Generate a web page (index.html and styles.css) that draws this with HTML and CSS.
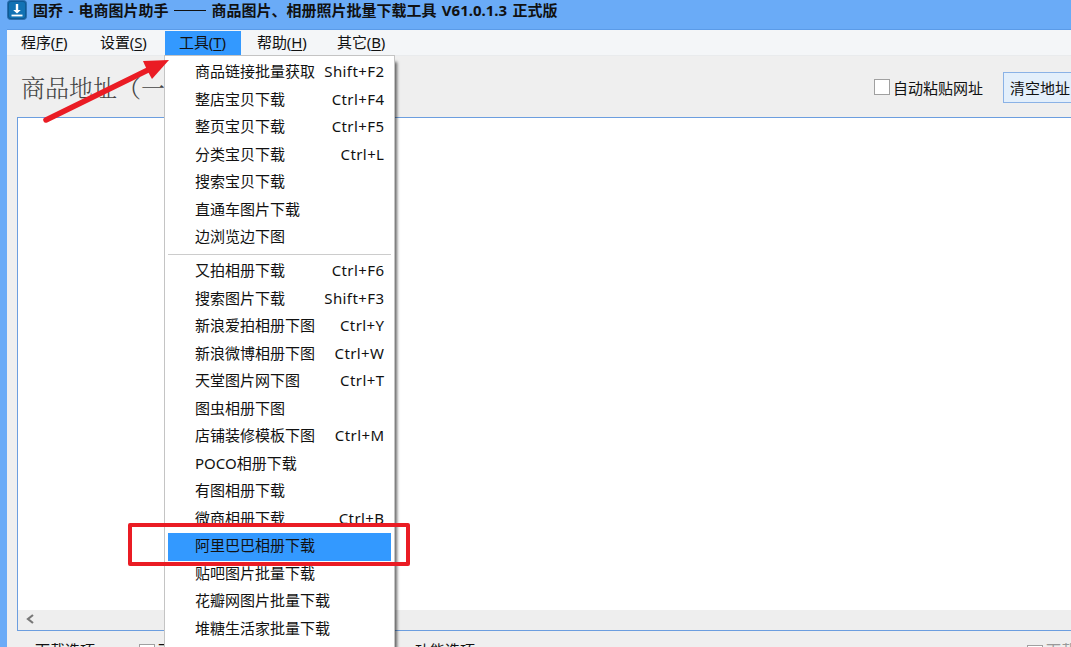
FILE: index.html
```
<!DOCTYPE html>
<html lang="zh-Hans">
<head>
  <meta charset="UTF-8">
  <title>固乔 - 电商图片助手</title>
  <link rel="stylesheet" href="styles.css">
</head>
<body>
  <div class="window">
    <div class="titlebar">
      <svg class="logo" width="20" height="20" viewBox="0 0 20 20">
        <rect x="0.5" y="0.5" width="19" height="19" rx="3" fill="#0d5a96" stroke="#2d6fae"/>
        <rect x="2" y="2" width="16" height="16" rx="2" fill="#1272b4"/>
        <path d="M8.8 4h2.4v6h2.6L10 13.6 6.2 10h2.6z" fill="#fff"/>
        <path d="M4.5 15.5h11" fill="none" stroke="#fff" stroke-width="1.8"/>
      </svg>
      <span class="title">固乔 - 电商图片助手 <i class="dash"></i> 商品图片、相册照片批量下载工具 V61.0.1.3 正式版</span>
    </div>
    <div class="client">
      <div class="menubar">
        <span class="menu-item">程序(<u>F</u>)</span>
        <span class="menu-item">设置(<u>S</u>)</span>
        <span class="menu-item active">工具(<u>T</u>)</span>
        <span class="menu-item">帮助(<u>H</u>)</span>
        <span class="menu-item">其它(<u>B</u>)</span>
      </div>
      <div class="toolbar">
        <span class="heading">商品地址（一</span>
        <label class="check"><span class="box"></span>自动粘贴网址</label>
        <button class="btn">清空地址</button>
      </div>
      <div class="textarea">
        <div class="scrollbar">
          <svg width="8" height="10" viewBox="0 0 8 10"><path d="M7 1L2 5l5 4" fill="none" stroke="#777" stroke-width="2.2"/></svg>
        </div>
      </div>
      <div class="options">
        <span class="group">下载选项</span>
        <span class="box"></span>
        <span class="opt">下</span>
        <span class="group second">功能选项</span>
        <span class="box last"></span>
        <span class="opt faint">下载</span>
      </div>
    </div>
  </div>

  <div class="dropdown">
    <div class="row">商品链接批量获取<span class="key">Shift+F2</span></div>
    <div class="row">整店宝贝下载<span class="key">Ctrl+F4</span></div>
    <div class="row">整页宝贝下载<span class="key">Ctrl+F5</span></div>
    <div class="row">分类宝贝下载<span class="key">Ctrl+L</span></div>
    <div class="row">搜索宝贝下载</div>
    <div class="row">直通车图片下载</div>
    <div class="row">边浏览边下图</div>
    <div class="separator"></div>
    <div class="row">又拍相册下载<span class="key">Ctrl+F6</span></div>
    <div class="row">搜索图片下载<span class="key">Shift+F3</span></div>
    <div class="row">新浪爱拍相册下图<span class="key">Ctrl+Y</span></div>
    <div class="row">新浪微博相册下图<span class="key">Ctrl+W</span></div>
    <div class="row">天堂图片网下图<span class="key">Ctrl+T</span></div>
    <div class="row">图虫相册下图</div>
    <div class="row">店铺装修模板下图<span class="key">Ctrl+M</span></div>
    <div class="row">POCO相册下载</div>
    <div class="row">有图相册下载</div>
    <div class="row">微商相册下载<span class="key">Ctrl+B</span></div>
    <div class="row selected">阿里巴巴相册下载</div>
    <div class="row">贴吧图片批量下载</div>
    <div class="row">花瓣网图片批量下载</div>
    <div class="row">堆糖生活家批量下载</div>
  </div>

  <!-- annotations -->
  <div class="mark"></div>
  <svg class="arrow" width="130" height="70" viewBox="0 0 130 70">
    <path d="M6 65L110 14" stroke="#ea1c24" stroke-width="5.5" stroke-linecap="round"/>
    <path d="M129 5L103 6 107 15 112 24z" fill="#ea1c24"/>
  </svg>
</body>
</html>
```

FILE: styles.css
```
* {
  box-sizing: border-box;
}
body {
  margin: 0;
  height: 647px;
  overflow: hidden;
  position: relative;
  font-family: "Noto Sans", "Noto Sans CJK SC", sans-serif;
  font-size: 15px;
  color: #111;
  white-space: nowrap;
}
.window {
  height: 647px;
  background: #6aabf7;
  display: flex;
  flex-direction: column;
}
.titlebar {
  height: 29px;
  flex: none;
  display: flex;
  align-items: flex-start;
  padding-left: 7px;
}
.title {
  margin-left: 6px;
  line-height: 20px;
  font-weight: bold;
  word-spacing: 1.5px;
}
.dash {
  display: inline-block;
  width: 32px;
  height: 1px;
  background: #111;
  vertical-align: 5px;
}
.client {
  flex: 1;
  min-height: 0;
  margin-left: 7px;
  background: #efefef;
  border-top: 1px solid #5b9be8;
  display: flex;
  flex-direction: column;
  overflow: hidden;
}
.menubar {
  height: 26px;
  flex: none;
  display: flex;
  background: #f4f6f8;
  border-bottom: 1px solid #e9ebed;
  padding-top: 1px;
}
.menu-item {
  width: 79px;
  padding-left: 14px;
  line-height: 22px;
  letter-spacing: -0.1px;
}
.menu-item u {
  text-underline-offset: 2px;
}
.menu-item.active {
  background: #3399ff;
  width: 76px;
}
.menu-item.active ~ .menu-item {
  padding-left: 16px;
  width: 80px;
}
.toolbar {
  height: 61px;
  flex: none;
  display: flex;
  align-items: center;
  padding-left: 14px;
}
.heading {
  font-family: "Liberation Serif", "Noto Serif CJK SC", "Noto Sans CJK SC", serif;
  font-size: 24px;
  font-weight: 300;
  color: #444;
  width: 853px;
  flex: none;
}
.check {
  display: flex;
  align-items: center;
  width: 129px;
  flex: none;
  padding-top: 1px;
}
.box {
  width: 16px;
  height: 16px;
  flex: none;
  border: 1px solid #a0a0a0;
  background: #fff;
  margin-right: 3px;
}
.btn {
  width: 86px;
  height: 31px;
  flex: none;
  margin-top: 2px;
  padding: 0 0 0 6px;
  text-align: left;
  font: inherit;
  color: #111;
  background: #e3effb;
  border: 1px solid #8ab2e6;
}
.textarea {
  height: 514px;
  flex: none;
  margin-left: 10px;
  background: #fff;
  border: 1px solid #6c9edf;
  border-right: none;
  display: flex;
  flex-direction: column;
  justify-content: flex-end;
}
.scrollbar {
  height: 20px;
  background: #eeeeee;
  display: flex;
  align-items: center;
  padding: 0 0 3px 8px;
}
.options {
  height: 40px;
  flex: none;
  display: flex;
  align-items: flex-start;
  padding: 8px 0 0 28px;
}
.options span {
  line-height: 22px;
}
.options .box {
  margin-top: 5px;
}
.group {
  width: 104px;
  flex: none;
}
.opt {
  width: 257px;
  flex: none;
}
.group.second {
  width: 612px;
}
.options .box.last {
  margin-top: 6px;
}
.faint {
  color: #999;
}

.dropdown {
  position: absolute;
  left: 164px;
  top: 55px;
  width: 231px;
  height: 610px;
  padding: 3px 3px 0 3px;
  background: #fff;
  border: 1px solid #c4c4c4;
  box-shadow: 3px 6px 3px -1px rgba(0,0,0,0.6);
}
.row {
  height: 27.5px;
  line-height: 25px;
  padding: 0 7px 0 27px;
  display: flex;
  justify-content: space-between;
}
.key {
  letter-spacing: 0.4px;
  margin-right: -0.4px;
}
.row.selected {
  background: #3399ff;
}
.separator {
  height: 6.5px;
  padding-top: 2px;
}
.separator::before {
  content: "";
  display: block;
  height: 1px;
  background: #ccc;
}
.mark {
  position: absolute;
  left: 128px;
  top: 523px;
  width: 282px;
  height: 43px;
  border: 4px solid #ea1c24;
  border-radius: 2px;
}
.arrow {
  position: absolute;
  left: 40px;
  top: 55px;
}
```
